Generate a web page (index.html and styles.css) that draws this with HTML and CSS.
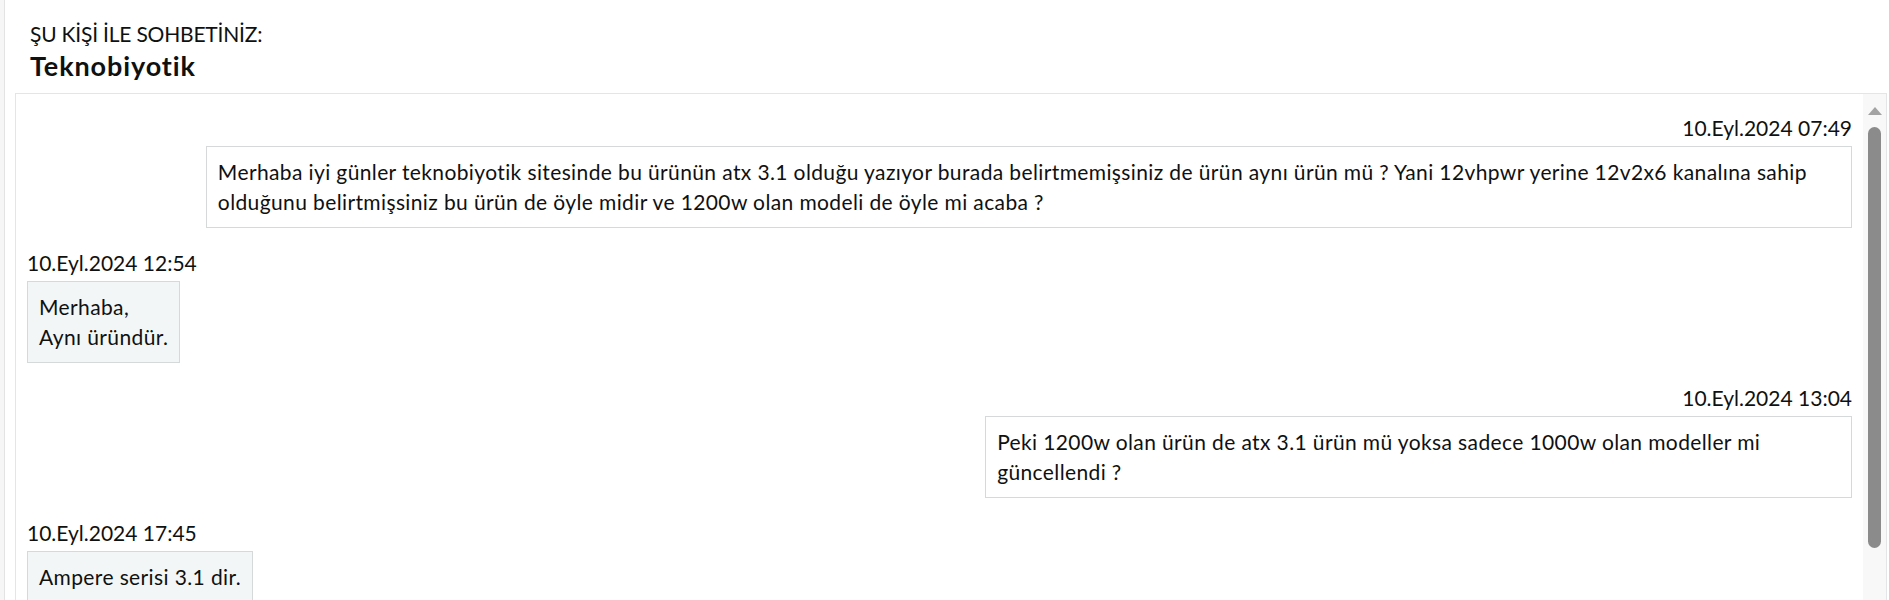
FILE: index.html
```html
<!DOCTYPE html>
<html lang="tr">
<head>
<meta charset="utf-8">
<title>Sohbet</title>
<link rel="stylesheet" href="styles.css">
</head>
<body>
<div class="page">
  <div class="header">
    <div class="label">ŞU KİŞİ İLE SOHBETİNİZ:</div>
    <div class="name">Teknobiyotik</div>
  </div>
  <div class="chat">
    <div class="messages">
      <div class="msg out">
        <div class="time">10.Eyl.2024 07:49</div>
        <div class="bubble wide">Merhaba iyi günler teknobiyotik sitesinde bu ürünün atx 3.1 olduğu yazıyor burada belirtmemişsiniz de ürün aynı ürün mü ? Yani 12vhpwr yerine 12v2x6 kanalına sahip olduğunu belirtmişsiniz bu ürün de öyle midir ve 1200w olan modeli de öyle mi acaba ?</div>
      </div>
      <div class="msg in">
        <div class="time">10.Eyl.2024 12:54</div>
        <div class="bubble">Merhaba,<br>Aynı üründür.</div>
      </div>
      <div class="msg out">
        <div class="time">10.Eyl.2024 13:04</div>
        <div class="bubble mid">Peki 1200w olan ürün de atx 3.1 ürün mü yoksa sadece 1000w olan modeller mi<br>güncellendi ?</div>
      </div>
      <div class="msg in">
        <div class="time">10.Eyl.2024 17:45</div>
        <div class="bubble">Ampere serisi 3.1 dir.</div>
      </div>
    </div>
    <div class="scrollbar">
      <div class="arrow"></div>
      <div class="thumb"></div>
    </div>
  </div>
</div>
</body>
</html>
```
FILE: styles.css
```css
* { box-sizing: border-box; }
html, body {
  margin: 0;
  height: 600px;
  overflow: hidden;
}
body {
  background: #f6f6f6;
  font-family: Lato, "Liberation Sans", sans-serif;
  font-variant-ligatures: none;
  color: #0f1111;
}
.page {
  margin-left: 4px;
  border-left: 1px solid #e3e3e3;
  background: #fff;
  height: 600px;
  padding: 19px 2px 0 10px;
}
.header {
  padding-left: 15px;
}
.label {
  font-size: 21px;
  line-height: 30px;
  letter-spacing: -0.2px;
}
.name {
  margin-top: 1px;
  font-size: 27px;
  font-weight: 700;
  line-height: 32px;
  letter-spacing: 0.9px;
}
.chat {
  margin-top: 11px;
  display: flex;
  border: 1px solid #e3e6e6;
  height: 600px;
  overflow: hidden;
}
.messages {
  flex: 1;
  min-width: 0;
  padding: 19px 11px 0 11px;
  display: flex;
  flex-direction: column;
}
.msg {
  display: flex;
  flex-direction: column;
  align-items: flex-start;
  margin-bottom: 20px;
}
.msg.out {
  align-items: flex-end;
}
.time {
  font-size: 21px;
  line-height: 30px;
  margin-bottom: 3px;
}
.bubble {
  font-size: 21px;
  line-height: 30px;
  letter-spacing: 0.38px;
  padding: 10px 11px;
  border: 1px solid #d5d9d9;
  background: #fff;
}
.msg.in .bubble {
  background: #f3f6f6;
}
.bubble.wide {
  width: 90.2%;
}
.bubble.mid {
  width: 47.5%;
}
.scrollbar {
  width: 23px;
  flex: none;
  background: #f8f8f8;
  display: flex;
  flex-direction: column;
  align-items: center;
  padding-top: 13px;
}
.arrow {
  width: 0;
  height: 0;
  border-left: 7px solid transparent;
  border-right: 7px solid transparent;
  border-bottom: 8px solid #a3a3a3;
}
.thumb {
  width: 13px;
  height: 421px;
  margin-top: 12px;
  background: #8b8b8b;
  border-radius: 7px;
}
```
